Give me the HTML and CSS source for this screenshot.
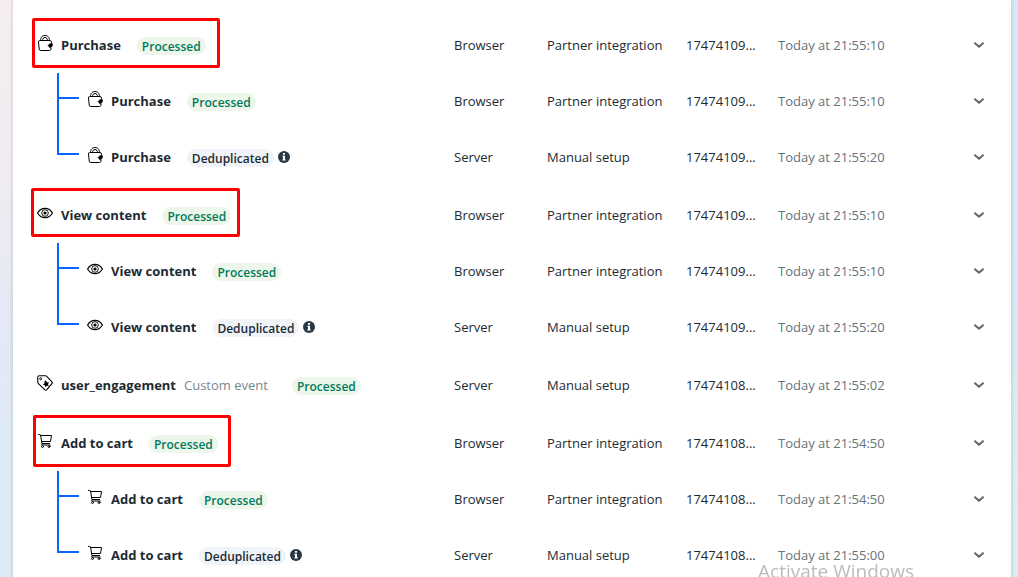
FILE: index.html
```
<!DOCTYPE html>
<html lang="en">
<head>
    <meta charset="UTF-8">
    <meta name="viewport" content="width=device-width, initial-scale=1.0">
    <title>Test events</title>
    <link rel="stylesheet" href="styles.css">
</head>
<body>
    <!-- Shared icons -->
    <svg class="sprite" aria-hidden="true">
        <symbol id="icon-bag" viewBox="0 0 16 16">
            <g fill="none" stroke="#000" stroke-linecap="round" stroke-linejoin="round">
                <path d="M3.500 5.500C3.500 2 5.500.5 8 .5s4.500 1.500 4.500 5"/>
                <path d="M5.500 5.500C5.500 3.500 6.500 2.500 8 2.500s2.500 1 2.500 3"/>
                <path d="M14.500 8.500V7.500Q14.500 5.500 13 5.500H2.500Q1.500 5.500 1.500 7L2.200 14Q2.300 15.500 3.800 15.500H12.500Q14 15.500 14.200 13.500"/>
            </g>
            <path d="M11 10.500l2-2 2.400.2.100 2.200-2.300 2.300z" fill="#000" stroke="#000" stroke-width=".5" stroke-linejoin="round"/>
        </symbol>
        <symbol id="icon-eye" viewBox="0 0 16 16">
            <path d="M.6 8C2.400 4.700 5 3.300 8 3.300s5.600 1.400 7.400 4.700C13.600 11.300 11 12.700 8 12.700S2.400 11.300.6 8z" fill="none" stroke="#000" stroke-width="1.200"/>
            <circle cx="8" cy="8" r="3.300" fill="none" stroke="#000" stroke-width=".9"/>
            <circle cx="8" cy="8" r="1.600" fill="#000"/>
        </symbol>
        <symbol id="icon-tag" viewBox="0 0 16 16">
            <path d="M.7 2.500Q.7.700 2.500.700L8.300.700Q9 .7 9.500 1.200L14.900 6.800Q15.700 7.700 14.900 8.600L9.600 14.900Q8.800 15.600 7.900 14.900L1.400 8.600Q.9 8.100.8 7.500z" fill="none" stroke="#000" stroke-width="1.100" stroke-linejoin="round"/>
            <circle cx="3.700" cy="3.700" r="1" fill="none" stroke="#000"/>
            <path d="M9 5.500l.9 2 2.200-.2-1.200 1.900 1.100 2-2.200-.4L8.500 12.300l-.6-2.100-2.200-.8 1.900-1.100-.1-2.200z" fill="#000"/>
        </symbol>
        <symbol id="icon-cart" viewBox="0 0 16 16">
            <g fill="none" stroke="#000" stroke-linejoin="round" stroke-linecap="round">
                <path d="M1.500 1.500h1.300q.6 0 .7.600L5 10.500h7.500"/>
                <path d="M3.500 2.500h11L13.500 8.500H4.700"/>
                <path d="M5 10.500q-1 1 0 1.500h8"/>
                <circle cx="5.500" cy="13.500" r="1"/>
                <circle cx="12" cy="13.500" r="1"/>
            </g>
        </symbol>
        <symbol id="icon-info" viewBox="0 0 12 12">
            <circle cx="6" cy="6" r="6" fill="#283943"/>
            <path d="M5 2h2v1.800H5zM4.300 4.800H7v3.700h.8v1H4.200v-1H5V5.800h-.7z" fill="#fff"/>
        </symbol>
        <symbol id="icon-chevron" viewBox="0 0 12 12">
            <path d="M2 4.200l4 3.600 4-3.600" fill="none" stroke="#606770" stroke-width="2" stroke-linecap="round" stroke-linejoin="round"/>
        </symbol>
    </svg>

    <main class="panel">
        <table class="events">
            <colgroup>
                <col>
                <col class="col-source">
                <col class="col-setup">
                <col class="col-id">
                <col class="col-time">
                <col class="col-toggle">
            </colgroup>

            <!-- Purchase -->
            <tbody>
                <tr>
                    <td><div class="event">
                        <svg class="icon"><use href="#icon-bag"/></svg>
                        <strong class="name">Purchase</strong>
                        <span class="badge processed">Processed</span>
                        <span class="mark mark-purchase"></span>
                    </div></td>
                    <td>Browser</td>
                    <td>Partner integration</td>
                    <td>17474109...</td>
                    <td class="time">Today at 21:55:10</td>
                    <td><button class="toggle" aria-label="Expand"><svg><use href="#icon-chevron"/></svg></button></td>
                </tr>
                <tr>
                    <td><div class="event child">
                        <span class="branch"></span>
                        <svg class="icon"><use href="#icon-bag"/></svg>
                        <strong class="name">Purchase</strong>
                        <span class="badge processed">Processed</span>
                    </div></td>
                    <td>Browser</td>
                    <td>Partner integration</td>
                    <td>17474109...</td>
                    <td class="time">Today at 21:55:10</td>
                    <td><button class="toggle" aria-label="Expand"><svg><use href="#icon-chevron"/></svg></button></td>
                </tr>
                <tr>
                    <td><div class="event child">
                        <span class="branch last"></span>
                        <svg class="icon"><use href="#icon-bag"/></svg>
                        <strong class="name">Purchase</strong>
                        <span class="badge">Deduplicated</span>
                        <svg class="info"><use href="#icon-info"/></svg>
                    </div></td>
                    <td>Server</td>
                    <td>Manual setup</td>
                    <td>17474109...</td>
                    <td class="time">Today at 21:55:20</td>
                    <td><button class="toggle" aria-label="Expand"><svg><use href="#icon-chevron"/></svg></button></td>
                </tr>
            </tbody>

            <!-- View content -->
            <tbody>
                <tr>
                    <td><div class="event">
                        <svg class="icon"><use href="#icon-eye"/></svg>
                        <strong class="name">View content</strong>
                        <span class="badge processed">Processed</span>
                        <span class="mark mark-view"></span>
                    </div></td>
                    <td>Browser</td>
                    <td>Partner integration</td>
                    <td>17474109...</td>
                    <td class="time">Today at 21:55:10</td>
                    <td><button class="toggle" aria-label="Expand"><svg><use href="#icon-chevron"/></svg></button></td>
                </tr>
                <tr>
                    <td><div class="event child">
                        <span class="branch"></span>
                        <svg class="icon"><use href="#icon-eye"/></svg>
                        <strong class="name">View content</strong>
                        <span class="badge processed">Processed</span>
                    </div></td>
                    <td>Browser</td>
                    <td>Partner integration</td>
                    <td>17474109...</td>
                    <td class="time">Today at 21:55:10</td>
                    <td><button class="toggle" aria-label="Expand"><svg><use href="#icon-chevron"/></svg></button></td>
                </tr>
                <tr>
                    <td><div class="event child">
                        <span class="branch last"></span>
                        <svg class="icon"><use href="#icon-eye"/></svg>
                        <strong class="name">View content</strong>
                        <span class="badge">Deduplicated</span>
                        <svg class="info"><use href="#icon-info"/></svg>
                    </div></td>
                    <td>Server</td>
                    <td>Manual setup</td>
                    <td>17474109...</td>
                    <td class="time">Today at 21:55:20</td>
                    <td><button class="toggle" aria-label="Expand"><svg><use href="#icon-chevron"/></svg></button></td>
                </tr>
            </tbody>

            <!-- Custom event -->
            <tbody>
                <tr>
                    <td><div class="event">
                        <svg class="icon"><use href="#icon-tag"/></svg>
                        <strong class="name">user_engagement</strong>
                        <span class="kind">Custom event</span>
                        <span class="badge processed">Processed</span>
                    </div></td>
                    <td>Server</td>
                    <td>Manual setup</td>
                    <td>17474108...</td>
                    <td class="time">Today at 21:55:02</td>
                    <td><button class="toggle" aria-label="Expand"><svg><use href="#icon-chevron"/></svg></button></td>
                </tr>
            </tbody>

            <!-- Add to cart -->
            <tbody>
                <tr>
                    <td><div class="event">
                        <svg class="icon"><use href="#icon-cart"/></svg>
                        <strong class="name">Add to cart</strong>
                        <span class="badge processed">Processed</span>
                        <span class="mark mark-cart"></span>
                    </div></td>
                    <td>Browser</td>
                    <td>Partner integration</td>
                    <td>17474108...</td>
                    <td class="time">Today at 21:54:50</td>
                    <td><button class="toggle" aria-label="Expand"><svg><use href="#icon-chevron"/></svg></button></td>
                </tr>
                <tr>
                    <td><div class="event child">
                        <span class="branch"></span>
                        <svg class="icon"><use href="#icon-cart"/></svg>
                        <strong class="name">Add to cart</strong>
                        <span class="badge processed">Processed</span>
                    </div></td>
                    <td>Browser</td>
                    <td>Partner integration</td>
                    <td>17474108...</td>
                    <td class="time">Today at 21:54:50</td>
                    <td><button class="toggle" aria-label="Expand"><svg><use href="#icon-chevron"/></svg></button></td>
                </tr>
                <tr>
                    <td><div class="event child">
                        <span class="branch last"></span>
                        <svg class="icon"><use href="#icon-cart"/></svg>
                        <strong class="name">Add to cart</strong>
                        <span class="badge">Deduplicated</span>
                        <svg class="info"><use href="#icon-info"/></svg>
                    </div></td>
                    <td>Server</td>
                    <td>Manual setup</td>
                    <td>17474108...</td>
                    <td class="time">Today at 21:55:00</td>
                    <td><button class="toggle" aria-label="Expand"><svg><use href="#icon-chevron"/></svg></button></td>
                </tr>
            </tbody>
        </table>
    </main>

    <div class="watermark">Activate Windows</div>
</body>
</html>
```

FILE: styles.css
```
/* Global Styles */
* { margin: 0; padding: 0; box-sizing: border-box; }
body {
    height: 100vh;
    padding: 0 7px 0 13px;
    overflow: hidden;
    font-family: "Open Sans", "Noto Sans", sans-serif;
    font-size: 13px;
    line-height: 20px;
    color: #1c2b33;
    background:
        linear-gradient(#dbe6f8, #dbe7f6 50%, #dbeff0) right / 50% 100% no-repeat,
        linear-gradient(#f6eef1, #f0ecf2 30%, #e4e9f5 55%, #dfebf7 75%, #deebf6) left / 50% 100% no-repeat;
}
.sprite { display: none; }
.panel {
    min-height: 100vh;
    padding-top: 17px;
    background-color: #fff;
    box-shadow: 0 0 4px rgba(0, 0, 0, 0.2);
}

/* Events table */
.events { width: 100%; table-layout: fixed; border-collapse: collapse; }
.col-source { width: 93px; }
.col-setup { width: 139px; }
.col-id { width: 92px; }
.col-time { width: 169px; }
.col-toggle { width: 64px; }
.events td { height: 56px; vertical-align: middle; white-space: nowrap; }
.events tbody + tbody { border-top: 2px solid #fff; }
.events .time { color: #65727a; }

.event {
    position: relative;
    display: flex;
    align-items: center;
    width: fit-content;
    height: 56px;
    margin-left: 24px;
}
.event.child { margin-left: 44px; }
.icon { width: 16px; height: 16px; margin: 0 8px 4px 0; }
.name { font-weight: 700; }
.kind { margin: 0 8px; color: #7b868c; }
.badge {
    margin: 1px 0 0 16px;
    padding: 1px 5px 0;
    border-radius: 9px;
    font-size: 12px;
    font-weight: 600;
    line-height: 17px;
    background-color: #f0f3f7;
}
.badge.processed { color: #007a5a; background-color: #edf6ea; }
.info { width: 12px; height: 12px; margin-left: 4px; }

/* Tree lines from a parent event to its children */
.branch {
    align-self: stretch;
    width: 22px;
    margin-right: 8px;
    background:
        linear-gradient(#0866ff, #0866ff) 0 0 / 2px 100% no-repeat,
        linear-gradient(#0866ff, #0866ff) 0 24px / 100% 2px no-repeat;
}
.branch.last { background-size: 2px 26px, 100% 2px; }

.toggle { display: block; width: 24px; height: 24px; margin-left: 20px; border: none; background: none; cursor: pointer; }
.toggle svg { display: block; width: 12px; height: 12px; margin: auto; }

/* Red highlight boxes */
.mark { position: absolute; border: 3px solid #fe0000; border-radius: 2px; pointer-events: none; }
.mark-purchase { inset: 1px -14px 5px -5px; }
.mark-view { inset: 1px -9px 6px -6px; }
.mark-cart { inset: 0 -13px 4px -4px; }

.watermark { position: fixed; right: 104px; bottom: -8px; font-size: 19px; line-height: 28px; color: rgba(120, 120, 120, 0.5); }
```
